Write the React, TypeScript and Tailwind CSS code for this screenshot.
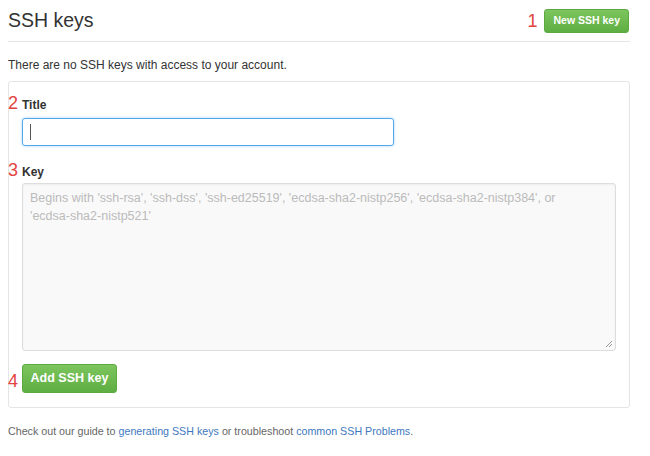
export default function App() {
  return (
    <div className="w-[650px] h-[456px] bg-white text-[#333] font-['Liberation_Sans',Arial,sans-serif]">
      <div className="ml-2 w-[622px]">
        {/* Header */}
        <div className="flex h-[42px] items-center justify-between border-b border-[#e5e5e5]">
          <h1 className="text-[19.5px] font-normal leading-none text-[#333]">SSH keys</h1>
          <div className="flex items-center gap-[7px] pr-px">
            <span className="text-[18px] leading-none font-light text-[#e2433f]">1</span>
            <button className="h-[24px] rounded-[3px] border border-[#5ca941] bg-gradient-to-b from-[#7dc55e] to-[#5eae42] px-[8px] text-[10.5px] font-bold text-white">
              New SSH key
            </button>
          </div>
        </div>

        <p className="mt-[15px] text-[12px] leading-4">There are no SSH keys with access to your account.</p>

        {/* Form box */}
        <div className="mt-[8px] rounded-[3px] border border-[#e5e5e5] px-[13px] pt-[14px] pb-[14px]">
          <div className="relative">
            <span className="absolute left-[-14px] top-[-2px] text-[18px] leading-none font-light text-[#e2433f]">2</span>
            <label className="block text-[12px] font-bold leading-[18px] text-[#333]">Title</label>
          </div>
          <div className="mt-[4px] flex h-[28px] w-[372px] items-center rounded-[3px] border border-[#51a7e8] px-[7px] shadow-[0_0_3px_rgba(81,167,232,0.5)]">
            <span className="h-[16px] w-px bg-[#555]" />
          </div>

          <div className="relative mt-[17px]">
            <span className="absolute left-[-14px] top-[-2px] text-[18px] leading-none font-light text-[#e2433f]">3</span>
            <label className="block text-[12px] font-bold leading-[18px] text-[#333]">Key</label>
          </div>
          <div className="relative mt-[2px] h-[168px] rounded-[3px] border border-[#ddd] bg-[#f9f9f9] px-[7px] py-[5px] text-[12.5px] leading-[18px] text-[#bbb] shadow-[inset_0_1px_2px_rgba(0,0,0,0.05)]">
            Begins with 'ssh-rsa', 'ssh-dss', 'ssh-ed25519', 'ecdsa-sha2-nistp256', 'ecdsa-sha2-nistp384', or
            <br />
            'ecdsa-sha2-nistp521'
            <svg className="absolute bottom-[2px] right-[2px]" width="8" height="8" viewBox="0 0 8 8">
              <path d="M7 1L1 7M7 4L4 7" stroke="#999" strokeWidth="1" />
            </svg>
          </div>

          <div className="relative mt-[13px] flex items-center">
            <span className="absolute left-[-14px] top-[8px] text-[18px] leading-none font-light text-[#e2433f]">4</span>
            <button className="h-[29px] w-[95px] rounded-[3px] border border-[#5ca941] bg-gradient-to-b from-[#7dc55e] to-[#5eae42] text-[12.5px] font-bold text-white">
              Add SSH key
            </button>
          </div>
        </div>

        <p className="mt-[15px] text-[10.7px] leading-4 text-[#666]">
          Check out our guide to <a className="text-[#4078c0]">generating SSH keys</a> or troubleshoot{" "}
          <a className="text-[#4078c0]">common SSH Problems</a>.
        </p>
      </div>
    </div>
  );
}
